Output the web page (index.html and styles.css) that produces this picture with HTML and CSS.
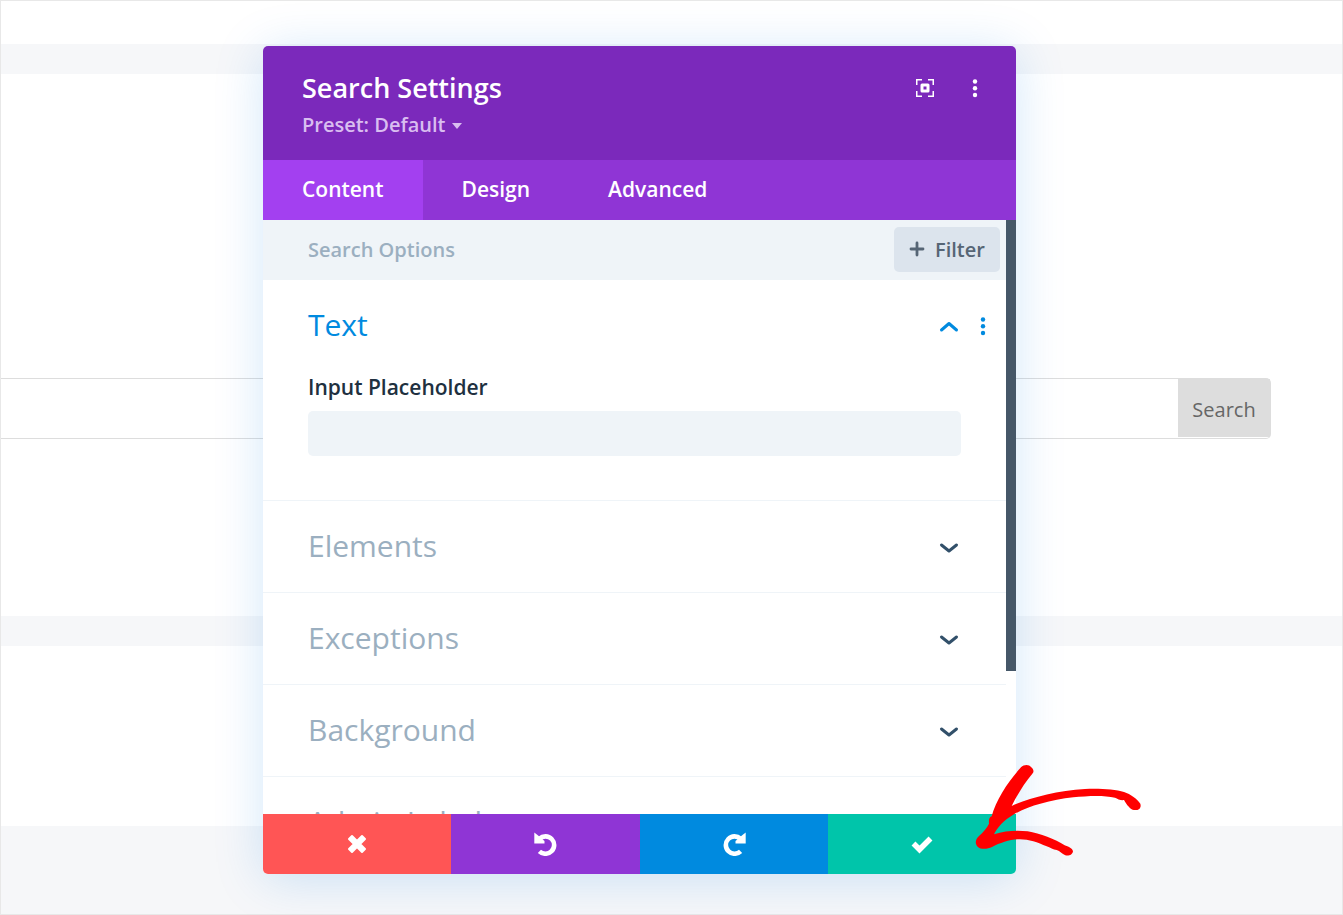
FILE: index.html
```html
<!DOCTYPE html>
<html lang="en">

<head>
    <meta charset="utf-8">
    <title>Search Settings</title>
    <link rel="stylesheet" href="styles.css">
</head>

<body>
    <main class="page">
        <div class="row row-top"></div>
        <div class="row row-search">
            <form class="search-form">
                <input type="text" aria-label="Search">
                <button type="button">Search</button>
            </form>
        </div>
        <div class="row row-bottom"></div>
    </main>

    <div class="overlay">
        <section class="modal" role="dialog" aria-label="Search Settings">
            <header class="modal-header">
                <div class="modal-title">
                    <h1>Search Settings</h1>
                    <button class="preset" type="button">Preset: Default <span class="caret"></span></button>
                </div>
                <button class="icon-btn" type="button" aria-label="Expand">
                    <svg width="20" height="20" viewBox="0 0 20 20" fill="none" stroke="#fff">
                        <path d="M1.750 7V1.750H7M13 1.750H18.250V7M18.250 13V18.250H13M7 18.250H1.750V13" stroke-width="1.500" />
                        <rect x="7" y="7" width="6" height="6" stroke-width="3" stroke-linejoin="round" />
                    </svg>
                </button>
                <button class="icon-btn" type="button" aria-label="More">
                    <svg width="20" height="20" viewBox="0 0 20 20" fill="#fff">
                        <circle cx="10" cy="3.500" r="2.200" />
                        <circle cx="10" cy="10.200" r="2.200" />
                        <circle cx="10" cy="17" r="2.200" />
                    </svg>
                </button>
            </header>

            <nav class="tabs">
                <a class="active" href="#content">Content</a>
                <a href="#design">Design</a>
                <a href="#advanced">Advanced</a>
            </nav>

            <div class="modal-body">
                <div class="panel" id="content">
                    <div class="options-bar">
                        <input type="text" placeholder="Search Options" aria-label="Search Options">
                        <button type="button">
                            <svg width="16" height="16" viewBox="0 0 16 16" fill="none" stroke="#566575" stroke-width="2.800" stroke-linecap="round">
                                <path d="M8 2V14M2 8H14" />
                            </svg>
                            Filter
                        </button>
                    </div>

                    <div class="group open">
                        <div class="group-header">
                            <h2>Text</h2>
                            <button type="button" aria-label="Collapse">
                                <svg width="24" height="24" viewBox="0 0 24 24">
                                    <path d="M4.500 16L12 9.500L19.500 16" />
                                </svg>
                            </button>
                            <button type="button" aria-label="More">
                                <svg class="dots" width="20" height="20" viewBox="0 0 20 20">
                                    <circle cx="10" cy="3.500" r="2.200" />
                                    <circle cx="10" cy="10.200" r="2.200" />
                                    <circle cx="10" cy="17" r="2.200" />
                                </svg>
                            </button>
                        </div>
                        <div class="field">
                            <label for="placeholder">Input Placeholder</label>
                            <input type="text" id="placeholder">
                        </div>
                    </div>

                    <div class="group">
                        <div class="group-header">
                            <h2>Elements</h2>
                            <button type="button" aria-label="Expand Elements">
                                <svg width="24" height="24" viewBox="0 0 24 24">
                                    <path d="M4.500 10L12 16L19.500 10" />
                                </svg>
                            </button>
                        </div>
                    </div>
                    <div class="group">
                        <div class="group-header">
                            <h2>Exceptions</h2>
                            <button type="button" aria-label="Expand Exceptions">
                                <svg width="24" height="24" viewBox="0 0 24 24">
                                    <path d="M4.500 10L12 16L19.500 10" />
                                </svg>
                            </button>
                        </div>
                    </div>
                    <div class="group">
                        <div class="group-header">
                            <h2>Background</h2>
                            <button type="button" aria-label="Expand Background">
                                <svg width="24" height="24" viewBox="0 0 24 24">
                                    <path d="M4.500 10L12 16L19.500 10" />
                                </svg>
                            </button>
                        </div>
                    </div>
                    <div class="group">
                        <div class="group-header">
                            <h2>Admin Label</h2>
                        </div>
                    </div>
                </div>
                <div class="scrollbar">
                    <div class="thumb"></div>
                </div>
            </div>

            <footer class="actions">
                <button class="discard" type="button" aria-label="Discard">
                    <svg width="24" height="24" viewBox="-12 -12 24 24" stroke-width="2" stroke-linejoin="round">
                        <path class="cross" d="M-5 -8L0 -3L5 -8L8 -5L3 0L8 5L5 8L0 3L-5 8L-8 5L-3 0L-8 -5Z" />
                    </svg>
                </button>
                <button class="undo" type="button" aria-label="Undo">
                    <svg width="24" height="24" viewBox="-13 -12.500 24 24" stroke-width="4.600">
                        <path d="M-6.500 -5.800A8.700 8.700 0 1 1 -6.600 6.800" />
                        <path class="head" d="M-11.700 -12L-8.500 -9.500L-1.500 -3.500V-1H-11.700Z" />
                    </svg>
                </button>
                <button class="redo" type="button" aria-label="Redo">
                    <svg width="24" height="24" viewBox="-12 -12.500 24 24" stroke-width="4.600">
                        <path d="M6.500 -5.800A8.700 8.700 0 1 0 6.600 6.800" />
                        <path class="head" d="M11.700 -12L8.500 -9.500L1.500 -3.500V-1H11.700Z" />
                    </svg>
                </button>
                <button class="save" type="button" aria-label="Save">
                    <svg width="24" height="24" viewBox="-12 -12 24 24" stroke-width="5.500">
                        <path d="M-8.500 -.5L-2.500 5.500L8.500 -5.500" />
                    </svg>
                </button>
            </footer>

            <!-- hand drawn arrow pointing at the save button -->
            <svg class="arrow" width="167" height="93" viewBox="105 72 501 279" fill="#f00">
                <path d="M243 82C252 72 268 73 273 81C281 88 283 95 277 101C254 128 232 164 215 198C262 176 350 151 435 147C480 145 525 148 552 156C572 162 592 178 601 191C605 204 596 212 582 210C571 209 560 194 552 180C543 182 533 177 525 173C490 165 440 168 400 172C330 180 260 200 222 223C190 242 172 263 162 283C195 272 231 270 263 274C300 281 346 298 374 316C384 320 397 324 399 334C398 344 386 349 376 346C366 342 360 332 350 330C340 329 330 323 320 319C292 307 264 297 236 298C208 299 180 309 156 321C142 328 122 329 113 320C104 311 106 298 117 288C129 277 142 263 147 251C146 241 147 232 155 229C168 178 208 120 243 82Z" />
            </svg>
        </section>
    </div>
</body>

</html>
```

FILE: styles.css
```css
* {
    box-sizing: border-box;
}

body {
    margin: 0;
    font-family: "Open Sans", "Noto Sans", sans-serif;
    font-size: 20px;
    background-color: #f6f7f9;
}

button,
input {
    font: inherit;
    border: none;
    margin: 0;
    padding: 0;
    background: none;
    outline: none;
}

button {
    cursor: pointer;
}

svg {
    display: block;
}

h1,
h2 {
    margin: 0;
}

/* page behind the modal */
.page {
    min-height: 100vh;
    display: flex;
    flex-direction: column;
    gap: 30px;
    border: 1px solid #e8e8e8;
}

.row {
    background-color: #fff;
}

.row-top {
    height: 43px;
}

.row-search {
    height: 542px;
    padding: 304px 71px 0 0;
}

.row-bottom {
    height: 180px;
}

.search-form {
    display: flex;
    align-items: flex-start;
    height: 61px;
    border: 1px solid #ddd;
    border-left: none;
    border-radius: 0 5px 5px 0;
}

.search-form input {
    flex: 1;
    height: 59px;
}

.search-form button {
    width: 92px;
    height: 58px;
    padding-top: 2px;
    background-color: #ddd;
    color: #666;
}

/* modal */
.overlay {
    position: absolute;
    inset: 0;
    display: flex;
    padding: 46px 327px 41px 263px;
}

.modal {
    position: relative;
    flex: 1;
    display: flex;
    flex-direction: column;
    background-color: #fff;
    border-radius: 5px;
    box-shadow: 0 5px 50px rgba(0, 120, 225, 0.18);
}

.modal-header {
    display: flex;
    align-items: flex-start;
    height: 114px;
    padding: 24px 26px 0 39px;
    gap: 20px;
    background-color: #7b29bb;
    border-radius: 5px 5px 0 0;
}

.modal-title {
    flex: 1;
}

.modal-title h1 {
    color: #fff;
    font-size: 27px;
    font-weight: 600;
    line-height: 36px;
}

.preset {
    display: flex;
    align-items: center;
    gap: 6px;
    color: #d9bdf0;
    font-weight: 600;
    line-height: 38px;
}

.caret {
    border: 5px solid transparent;
    border-top: 6px solid #d9bdf0;
    border-bottom: none;
    margin-top: 2px;
}

.icon-btn {
    width: 30px;
    height: 36px;
    display: flex;
    align-items: center;
    justify-content: center;
}

.tabs {
    display: flex;
    height: 60px;
    background-color: #8f35d5;
}

.tabs a {
    padding: 0 39px;
    color: #fff;
    font-size: 21px;
    font-weight: 600;
    line-height: 58px;
    text-decoration: none;
}

.tabs .active {
    background-color: #a340f0;
}

.modal-body {
    flex: 1;
    min-height: 0;
    display: flex;
}

.panel {
    flex: 1;
    overflow: hidden;
}

.scrollbar {
    width: 10px;
}

.thumb {
    height: 76%;
    background-color: #455768;
}

.options-bar {
    display: flex;
    align-items: center;
    height: 60px;
    padding: 0 6px 2px 45px;
    background-color: #eff4f8;
}

.options-bar input {
    flex: 1;
    font-weight: 600;
}

.options-bar input::placeholder {
    color: #9bafc0;
    opacity: 1;
}

.options-bar button {
    display: flex;
    align-items: center;
    justify-content: center;
    gap: 10px;
    width: 106px;
    height: 45px;
    background-color: #dce4ed;
    border-radius: 5px;
    color: #566575;
    font-weight: 600;
}

.group {
    border-bottom: 1px solid #eff4f8;
}

.group-header {
    display: flex;
    align-items: center;
    height: 91px;
    padding: 0 45px;
}

.group-header h2 {
    flex: 1;
    padding-bottom: 2px;
    color: #9bafc0;
    font-size: 30px;
    font-weight: 400;
}

.group-header svg {
    fill: none;
    stroke: #32506a;
    stroke-width: 3;
    stroke-linecap: round;
    stroke-linejoin: round;
}

.open .group-header {
    gap: 12px;
    padding-right: 13px;
}

.open h2 {
    color: #008adf;
}

.open .group-header svg {
    stroke: #008adf;
}

.open .group-header .dots {
    fill: #008adf;
    stroke: none;
}

.field {
    padding: 0 45px 44px;
}

.field label {
    display: block;
    margin-bottom: 8px;
    color: #20303f;
    font-size: 21px;
    font-weight: 600;
    line-height: 32px;
}

.field input {
    display: block;
    width: 100%;
    height: 45px;
    padding: 0 12px;
    background-color: #eff4f8;
    border-radius: 5px;
}

.actions {
    display: flex;
    height: 60px;
}

.actions button {
    flex: 1;
    display: flex;
    align-items: center;
    justify-content: center;
}

.actions svg {
    fill: none;
    stroke: #fff;
}

.actions .cross {
    fill: #fff;
}

.actions .head {
    fill: #fff;
    stroke: none;
}

.discard {
    background-color: #ff5555;
    border-radius: 0 0 0 5px;
}

.undo {
    background-color: #8f35d5;
}

.redo {
    background-color: #008adf;
}

.save {
    background-color: #00c5aa;
    border-radius: 0 0 5px 0;
}

.arrow {
    position: absolute;
    right: -126px;
    bottom: 17px;
}
```
